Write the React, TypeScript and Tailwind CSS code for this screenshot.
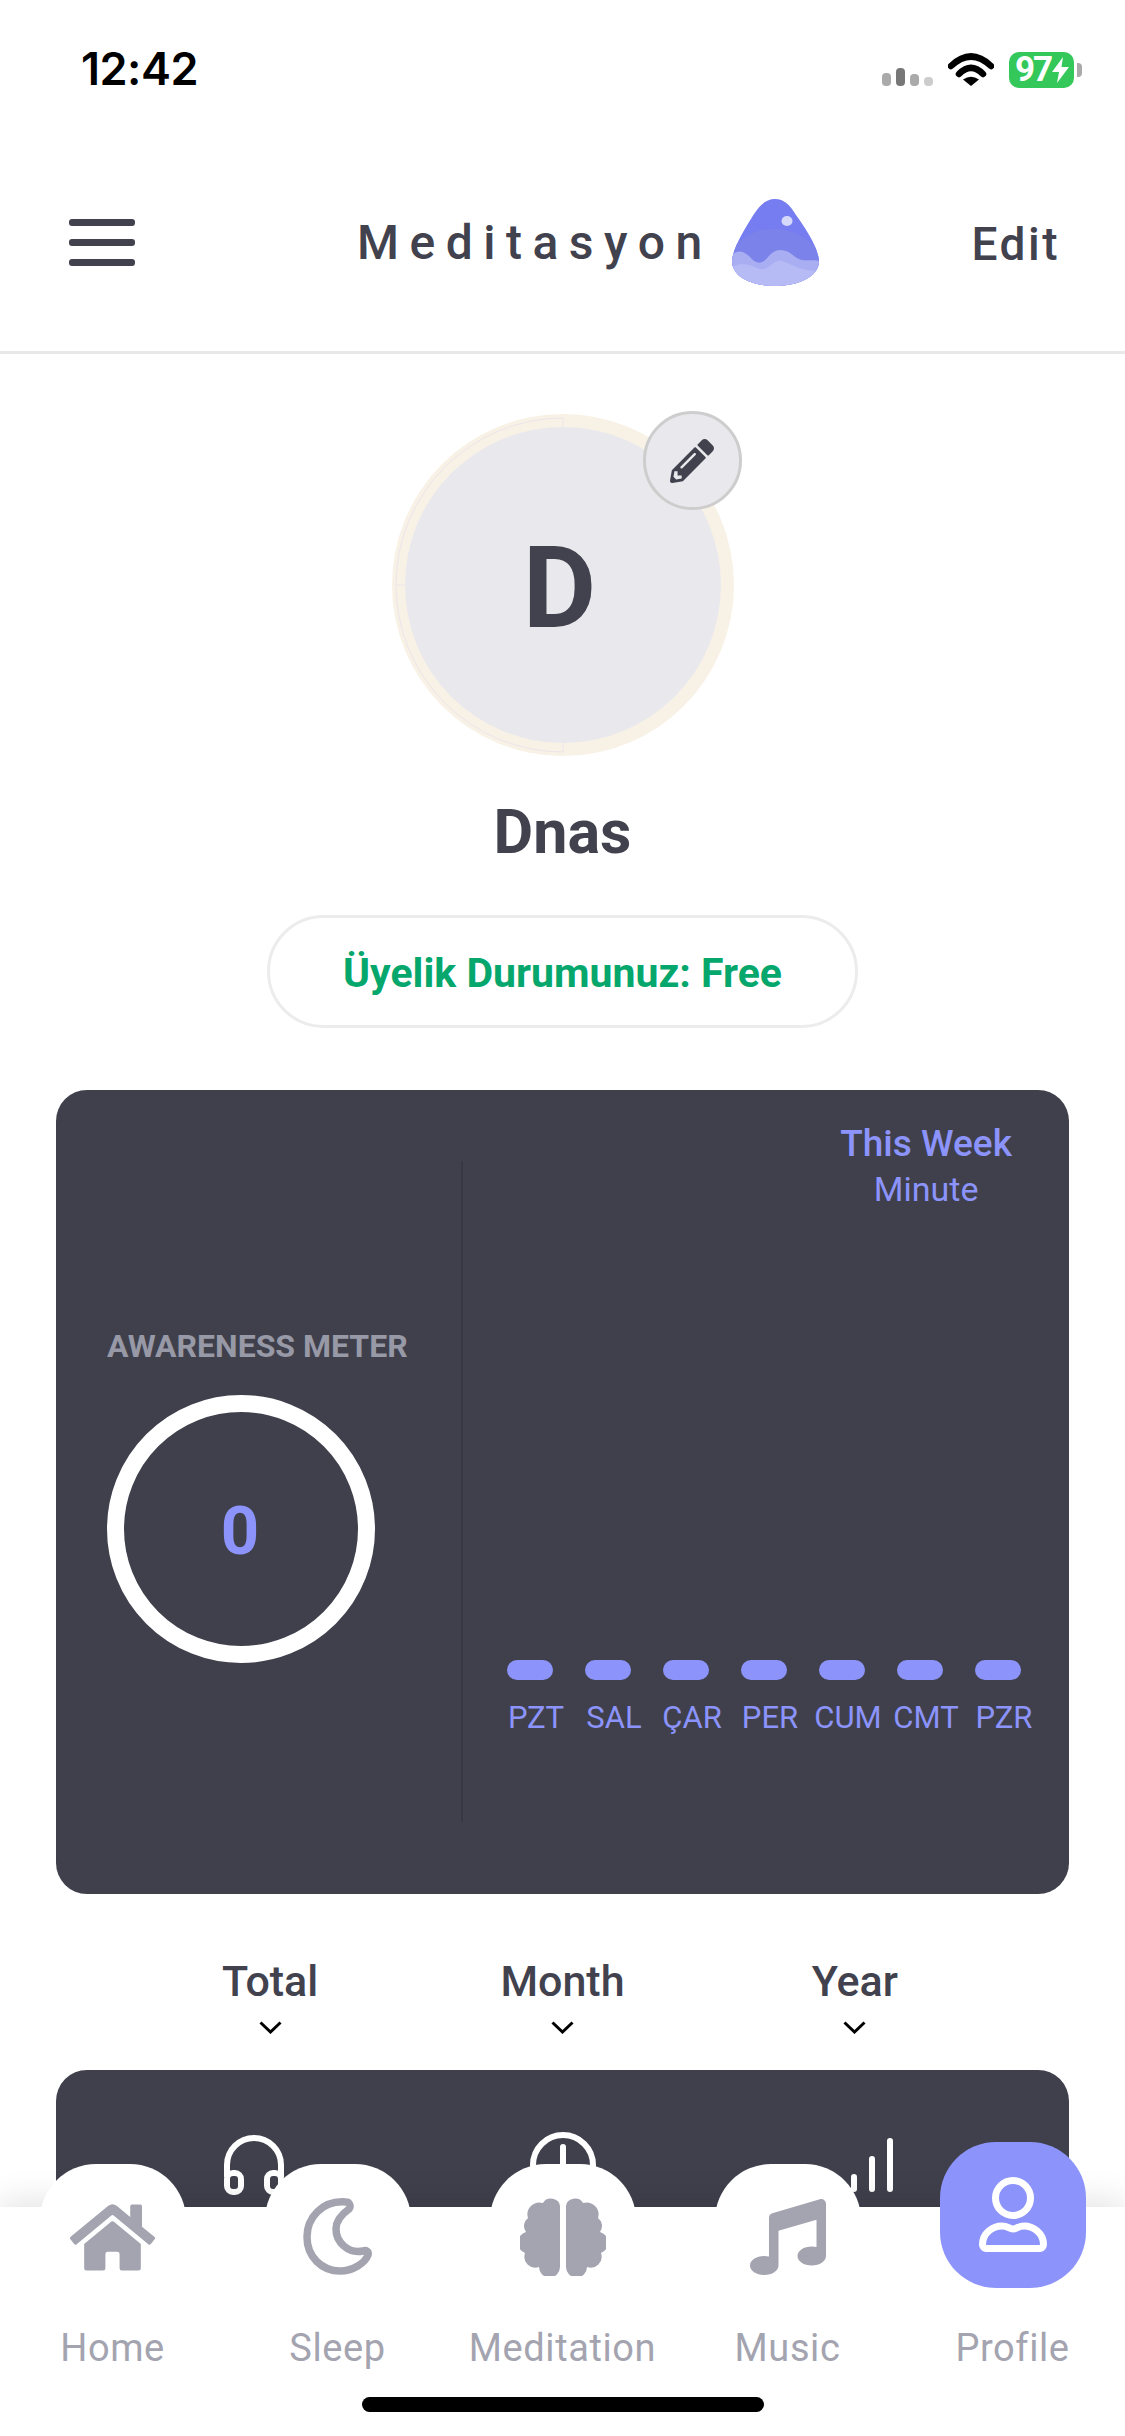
import React from "react";
import { FaHome, FaMusic, FaPencilAlt } from "react-icons/fa";

const days = ["PZT", "SAL", "ÇAR", "PER", "CUM", "CMT", "PZR"];
const filters = ["Total", "Month", "Year"];

const StatusBar = () => (
  <div className="flex h-[134px] items-start justify-between pl-[81px] pr-[43px] pt-[52px]">
    <span className="-mt-[1px] font-[Inter] text-[45px] leading-[36px] font-semibold tracking-[-0.5px] text-black">12:42</span>
    <div className="flex items-end">
      <div className="mb-[15px] flex items-end gap-[5px]">
        <div className="h-[13px] w-[9px] rounded-[4px] bg-[#aaaaaa]" />
        <div className="h-[18px] w-[9px] rounded-[4px] bg-[#777777]" />
        <div className="h-[12px] w-[9px] rounded-[4px] bg-[#aaaaaa]" />
        <div className="h-[9px] w-[9px] rounded-[4px] bg-[#cccccc]" />
      </div>
      <svg width="46" height="33" viewBox="0 0 46 33" className="mb-[15px] ml-[15px]">
        <path d="M3 13Q23 -6 43 13" fill="none" stroke="#000" strokeWidth="6.5" strokeLinecap="round" />
        <path d="M11 21Q23 9 35 21" fill="none" stroke="#000" strokeWidth="6.5" strokeLinecap="round" />
        <path d="M15 26.5L23 33L31 26.5Q23 21 15 26.5Z" fill="#000" />
      </svg>
      <div className="mb-[13px] ml-[15px] flex h-[36px] w-[65px] items-center rounded-[10px] bg-[#34c759] pl-[6px]">
        <span className="font-[Roboto] text-[35px] leading-[36px] font-bold tracking-[-2px] text-white">97</span>
        <svg width="17" height="26" viewBox="0 0 17 26" className="ml-[1px]">
          <path d="M11 0L0 15H7L5 26L17 10H9.5Z" fill="#fff" />
        </svg>
      </div>
      <div className="mb-[24px] ml-[3px] h-[14px] w-[5px] rounded-r-[4px] bg-[#aaaaaa]" />
    </div>
  </div>
);

const DropLogo = () => (
  <svg width="87" height="87" viewBox="0 0 87 87">
    <defs>
      <clipPath id="drop">
        <path d="M43 0C52 0 58 6 64 16C74 30 86 48 87 62C87 78 66 87 43 87C20 87 0 78 0 62C1 48 14 28 22 15C28 6 34 0 43 0Z" />
      </clipPath>
    </defs>
    <g clipPath="url(#drop)">
      <rect width="87" height="87" fill="#767df0" />
      <path d="M0 50C14 34 28 30 43 30C58 30 76 38 87 52V87H0Z" fill="#7b82ea" />
      <path d="M0 56C6 50 12 52 18 58C24 65 30 66 36 58C44 48 54 50 62 57C70 64 78 60 87 62V87H0Z" fill="#a9aef3" />
      <path d="M0 68C10 62 18 66 28 70C36 72 38 64 46 62C54 60 62 72 87 72V87H0Z" fill="#b6baf5" />
    </g>
    <ellipse cx="55" cy="22" rx="5.5" ry="5" fill="#d6d9fa" />
  </svg>
);

const Header = () => (
  <div className="flex h-[220px] items-center border-b-[3px] border-[#e8e8e8] pl-[69px] pr-[65px] text-[#41424e]">
    <div className="flex w-[66px] flex-col gap-[13px]">
      <div className="h-[7px] rounded-[3px] bg-[#41424e]" />
      <div className="h-[7px] rounded-[3px] bg-[#41424e]" />
      <div className="h-[7px] rounded-[3px] bg-[#41424e]" />
    </div>
    <span className="ml-[222px] text-[48px] leading-[56px] font-medium tracking-[10.5px]">Meditasyon</span>
    <div className="ml-[19px] shrink-0">
      <DropLogo />
    </div>
    <span className="ml-auto pt-[2px] text-[46px] leading-[54px] font-medium tracking-[2.5px]">Edit</span>
  </div>
);

const Avatar = () => (
  <div className="relative flex h-[342px] w-[342px] items-center justify-center rounded-full bg-[#f8f1e6]">
    <svg width="342" height="342" viewBox="0 0 342 342" className="absolute inset-0">
      <path d="M171 4A167 167 0 0 0 171 338M171 4V14M4 171H14M171 338V328" fill="none" stroke="#ece5ea" strokeWidth="1" />
    </svg>
    <div className="relative flex h-[316px] w-[316px] items-center justify-center rounded-full bg-[#e9e9ed]">
      <span className="mr-[6px] pt-[8px] text-[113px] leading-[130px] font-bold text-[#41424e]">D</span>
    </div>
    <div className="absolute left-[251px] top-[-3px] flex h-[99px] w-[99px] items-center justify-center rounded-full border-[3px] border-[#cdcdcd] bg-[#e9e9ed]">
      <FaPencilAlt size={44} color="#41424e" />
    </div>
  </div>
);

const AwarenessCard = () => (
  <div className="mx-[56px] mt-[62px] flex h-[804px] rounded-[31px] bg-[#3f404c]">
    <div className="mb-[72px] mt-[71px] w-[407px] border-r-2 border-[#373842] pl-[51px] pt-[167px]">
      <p className="text-[32px] leading-[36px] font-bold whitespace-nowrap text-[#9899a6]">AWARENESS METER</p>
      <div className="mt-[31px] flex h-[268px] w-[268px] items-center justify-center rounded-full border-[17px] border-white">
        <span className="mr-[2px] pt-[4px] text-[67px] leading-[78px] font-bold text-[#8c94fb]">0</span>
      </div>
    </div>
    <div className="flex flex-1 flex-col pb-[158px] pt-[33px] text-[#8c94fb]">
      <div className="mr-[57px] flex flex-col items-center self-end">
        <span className="text-[37px] leading-[42px] font-medium">This Week</span>
        <span className="mt-[5px] text-[34px] leading-[38px]">Minute</span>
      </div>
      <div className="mt-auto flex pl-[34px]">
        {days.map((day) => (
          <div key={day} className="flex w-[78px] flex-col items-center">
            <div className="mr-[12px] h-[20px] w-[46px] rounded-full bg-[#8c94fb]" />
            <span className="mt-[20px] text-[31px] leading-[36px]">{day}</span>
          </div>
        ))}
      </div>
    </div>
  </div>
);

const StatsCard = () => (
  <div className="mx-[56px] mt-[36px] h-[400px] rounded-t-[31px] bg-[#3f404c] px-[43px] pt-[62px]">
    <div className="grid grid-cols-3">
      <div className="flex justify-center pt-[3px]">
        <svg width="60" height="60" viewBox="0 0 60 60" fill="none" stroke="#fff" strokeWidth="6">
          <path d="M3 42V30A27 27 0 0 1 57 30V42" />
          <rect x="3" y="38" width="14" height="19" rx="6" />
          <rect x="43" y="38" width="14" height="19" rx="6" />
        </svg>
      </div>
      <div className="flex justify-center">
        <svg width="66" height="66" viewBox="0 0 66 66" fill="none" stroke="#fff" strokeWidth="6" strokeLinecap="round">
          <circle cx="33" cy="33" r="30" />
          <path d="M33 15V40" />
        </svg>
      </div>
      <div className="flex justify-center pt-[6px]">
        <svg width="42" height="54" viewBox="0 0 42 54" fill="none" stroke="#fff" strokeWidth="6" strokeLinecap="round">
          <path d="M3 39V51M21 21V51M39 3V51" />
        </svg>
      </div>
    </div>
  </div>
);

const MoonIcon = () => (
  <svg width="76" height="78" viewBox="300 68 76 78" fill="none" stroke="#a3a4b0" strokeWidth="7.5" strokeLinejoin="round">
    <path d="M346 72C322 70 307 88 307 107C307 127 322 141 340 141C353 141 365 133 368 125C369 121 366 120 363 121C348 124 336 112 336 99C336 90 342 84 349 79C351 77 350 72 346 72Z" />
  </svg>
);

const BrainIcon = () => {
  const lobe = "M40 8A9 8 0 0 0 23 5A12 12 0 0 0 8 20A10 10 0 0 0 6 34A11 11 0 0 0 5 55A11 11 0 0 0 19 69A10 10 0 0 0 40 69Z";
  return (
    <svg width="86" height="78" viewBox="0 0 86 78" fill="#a3a4b0">
      <path d={lobe} />
      <path d={lobe} transform="translate(86 0) scale(-1 1)" />
    </svg>
  );
};

const PersonIcon = () => (
  <svg width="68" height="76" viewBox="0 0 68 76" fill="none" stroke="#fff" strokeWidth="7">
    <circle cx="34" cy="21" r="17.5" />
    <path d="M7 71.5H61A4 4 0 0 0 64.5 67.5C64.5 56 54 49 45 49C39 49 38 52 34 52C30 52 29 49 23 49C14 49 3.5 56 3.5 67.5A4 4 0 0 0 7 71.5Z" />
  </svg>
);

const TabBar = () => (
  <div className="absolute bottom-0 left-0 w-full bg-white shadow-[0_-8px_30px_rgba(0,0,0,0.1)]">
    <div className="flex">
      <div className="flex w-[225px] flex-col items-center">
        <div className="-mt-[43px] flex h-[146px] w-[146px] items-center justify-center rounded-[56px] bg-white">
          <FaHome size={85} color="#a3a4b0" />
        </div>
        <span className="mt-[16px] text-[38px] leading-[44px] tracking-[0.6px] text-[#a3a4b0]">Home</span>
      </div>
      <div className="flex w-[225px] flex-col items-center">
        <div className="-mt-[43px] flex h-[146px] w-[146px] items-center justify-center rounded-[56px] bg-white">
          <MoonIcon />
        </div>
        <span className="mt-[16px] text-[38px] leading-[44px] tracking-[0.6px] text-[#a3a4b0]">Sleep</span>
      </div>
      <div className="flex w-[225px] flex-col items-center">
        <div className="-mt-[43px] flex h-[146px] w-[146px] items-center justify-center rounded-[56px] bg-white">
          <BrainIcon />
        </div>
        <span className="mt-[16px] text-[38px] leading-[44px] tracking-[0.6px] text-[#a3a4b0]">Meditation</span>
      </div>
      <div className="flex w-[225px] flex-col items-center">
        <div className="-mt-[43px] flex h-[146px] w-[146px] items-center justify-center rounded-[56px] bg-white">
          <FaMusic size={76} color="#a3a4b0" />
        </div>
        <span className="mt-[16px] text-[38px] leading-[44px] tracking-[0.6px] text-[#a3a4b0]">Music</span>
      </div>
      <div className="flex w-[225px] flex-col items-center">
        <div className="-mt-[65px] flex h-[146px] w-[146px] items-center justify-center rounded-[56px] bg-[#8c94fb]">
          <PersonIcon />
        </div>
        <span className="mt-[38px] text-[38px] leading-[44px] tracking-[0.6px] text-[#a3a4b0]">Profile</span>
      </div>
    </div>
    <div className="mx-auto mb-[24px] mt-[27px] h-[15px] w-[402px] rounded-full bg-black" />
  </div>
);

export default function App() {
  return (
    <div className="relative h-[2436px] w-[1125px] overflow-hidden bg-white font-[Roboto,sans-serif]">
      <StatusBar />
      <Header />
      <div className="flex flex-col items-center pt-[60px]">
        <Avatar />
        <h1 className="mt-[41px] text-[61px] leading-[70px] font-bold text-[#41424e]">Dnas</h1>
        <div className="mt-[48px] flex h-[113px] w-[591px] items-center justify-center rounded-full border-[3px] border-[#ececec]">
          <span className="pt-[3px] text-[41px] leading-[48px] font-bold text-[#06a76c]">Üyelik Durumunuz: Free</span>
        </div>
      </div>
      <AwarenessCard />
      <div className="mt-[62px] grid grid-cols-3 px-[124px]">
        {filters.map((filter) => (
          <div key={filter} className="flex flex-col items-center">
            <span className="text-[43px] leading-[50px] font-medium text-[#41424e]">{filter}</span>
            <svg width="23" height="13" viewBox="0 0 23 13" fill="none" stroke="#000" strokeWidth="3" className="mt-[15px]">
              <path d="M1.5 1.5L11.5 11L21.5 1.5" />
            </svg>
          </div>
        ))}
      </div>
      <StatsCard />
      <TabBar />
    </div>
  );
}
